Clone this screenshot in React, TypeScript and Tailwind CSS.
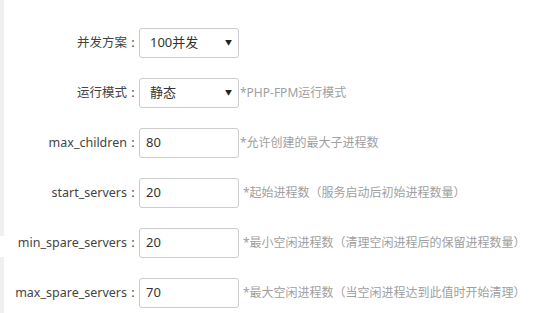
const FONT = { fontFamily: '"Noto Sans", "Noto Sans CJK SC", sans-serif' };

type Row = {
  label: string;
  value: string;
  select?: boolean;
  help?: string;
  helpGap?: string;
};

const rows: Row[] = [
  { label: "并发方案", value: "100并发", select: true },
  { label: "运行模式", value: "静态", select: true, help: "*PHP-FPM运行模式", helpGap: "ml-[1px]" },
  { label: "max_children", value: "80", help: "*允许创建的最大子进程数", helpGap: "ml-[1px]" },
  { label: "start_servers", value: "20", help: "*起始进程数（服务启动后初始进程数量）", helpGap: "ml-[4px]" },
  { label: "min_spare_servers", value: "20", help: "*最小空闲进程数（清理空闲进程后的保留进程数量）", helpGap: "ml-[4px]" },
  { label: "max_spare_servers", value: "70", help: "*最大空闲进程数（当空闲进程达到此值时开始清理）", helpGap: "ml-[4px]" },
];

export default function App() {
  return (
    <div className="flex h-[313px] w-[544px] overflow-hidden bg-white" style={FONT}>
      <div className="flex w-[4px] flex-col">
        <div className="h-[236px] bg-[#f0f0f0]" />
        <div className="mt-[21px] flex-1 bg-[#f0f0f0]" />
      </div>
      <div className="flex flex-col gap-[20px] pt-[28px]">
        {rows.map((r) => (
          <div key={r.label} className="flex h-[30px] items-center">
            <div className="flex w-[135px] items-center justify-end text-[12.5px] text-[#444]">
              <span>{r.label}</span>
              <span className="w-[12px] text-center">:</span>
            </div>
            <div className="flex h-[30px] w-[100px] items-center justify-between rounded-[3px] border border-[#ccc] bg-white pl-[6px] pr-[6px] text-[13px] text-[#333]">
              <span className={r.select ? "pl-[4px]" : ""}>{r.value}</span>
              {r.select && <span className="text-[7px] text-[#222]">▼</span>}
            </div>
            {r.help && (
              <div className={`${r.helpGap} whitespace-nowrap text-[12px] text-[#a0a0a0]`}>
                {r.help}
              </div>
            )}
          </div>
        ))}
      </div>
    </div>
  );
}
